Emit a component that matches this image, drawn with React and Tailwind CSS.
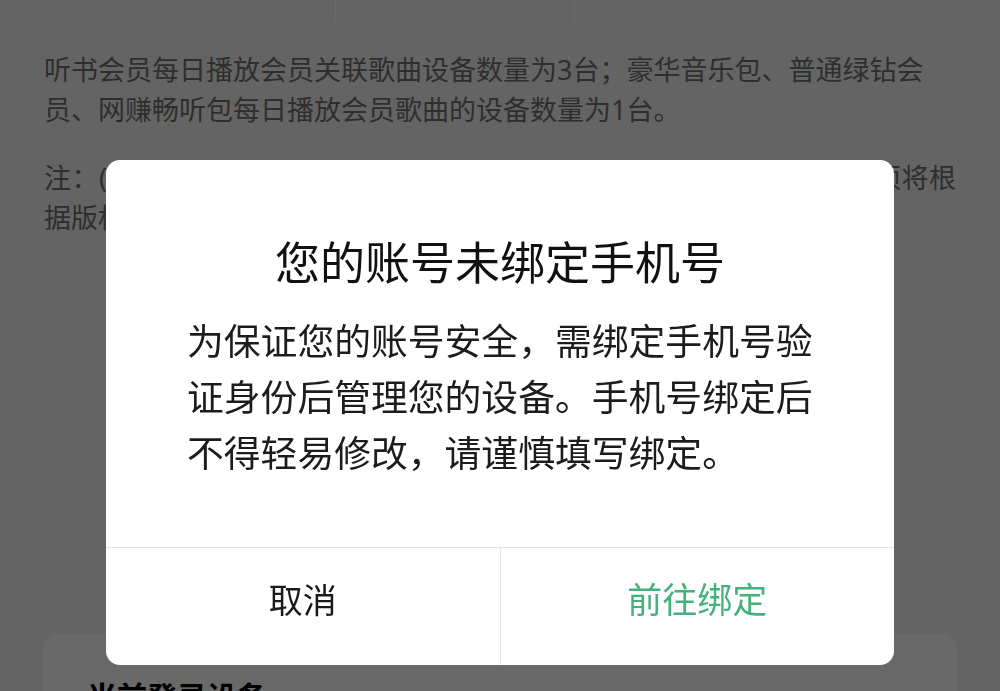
const FONT = { fontFamily: '"Noto Sans", "Noto Sans CJK SC", sans-serif' };

function DevicePage() {
  return (
    <div className="min-h-[691px] bg-[#646464] overflow-hidden" style={FONT}>
      <div className="flex h-[23px]">
        <div className="w-[335px]" />
        <div className="w-[240px] border-x border-[#6a6a6a]" />
      </div>

      <div className="px-[44px] pt-[27px] text-[27px] leading-[40px] text-[#2e2e2e]">
        <p>听书会员每日播放会员关联歌曲设备数量为3台；豪华音乐包、普通绿钻会员、网赚畅听包每日播放会员歌曲的设备数量为1台。</p>
        <p className="mt-[28px] text-justify">
          注：(1)会员歌曲每日播放设备数量以实际播放量为准，部分歌曲权益须将根据版权方要求进行调整。
        </p>
      </div>

      <div className="mx-[43px] mt-[395px] rounded-[16px] bg-[#696969] px-[44px] pt-[44px] pb-6">
        <h2 className="text-[30px] leading-[40px] font-bold text-black">当前登录设备</h2>
      </div>
    </div>
  );
}

function BindPhoneDialog() {
  return (
    <div className="fixed inset-0 flex flex-col items-center pt-[160px]" style={FONT}>
      <div className="w-[788px] h-[505px] flex flex-col rounded-[14px] bg-white overflow-hidden">
        <div className="flex-1 px-[81px] pt-[73px]">
          <h1 className="text-center text-[45px] leading-[60px] text-[#111]">您的账号未绑定手机号</h1>
          <p className="mt-[20px] text-[36.8px] leading-[56px] text-[#1c1c1c]">
            为保证您的账号安全，需绑定手机号验证身份后管理您的设备。手机号绑定后不得轻易修改，请谨慎填写绑定。
          </p>
        </div>
        <div className="flex h-[118px] border-t border-[#e6e6e6]">
          <button className="flex-1 flex items-center justify-center pb-[12px] text-[34px] text-[#1a1a1a]">取消</button>
          <div className="w-px bg-[#e6e6e6]" />
          <button className="flex-1 flex items-center justify-center pb-[12px] text-[35px] text-[#45b27d]">前往绑定</button>
        </div>
      </div>
    </div>
  );
}

export default function App() {
  return (
    <div className="relative">
      <DevicePage />
      <BindPhoneDialog />
    </div>
  );
}
